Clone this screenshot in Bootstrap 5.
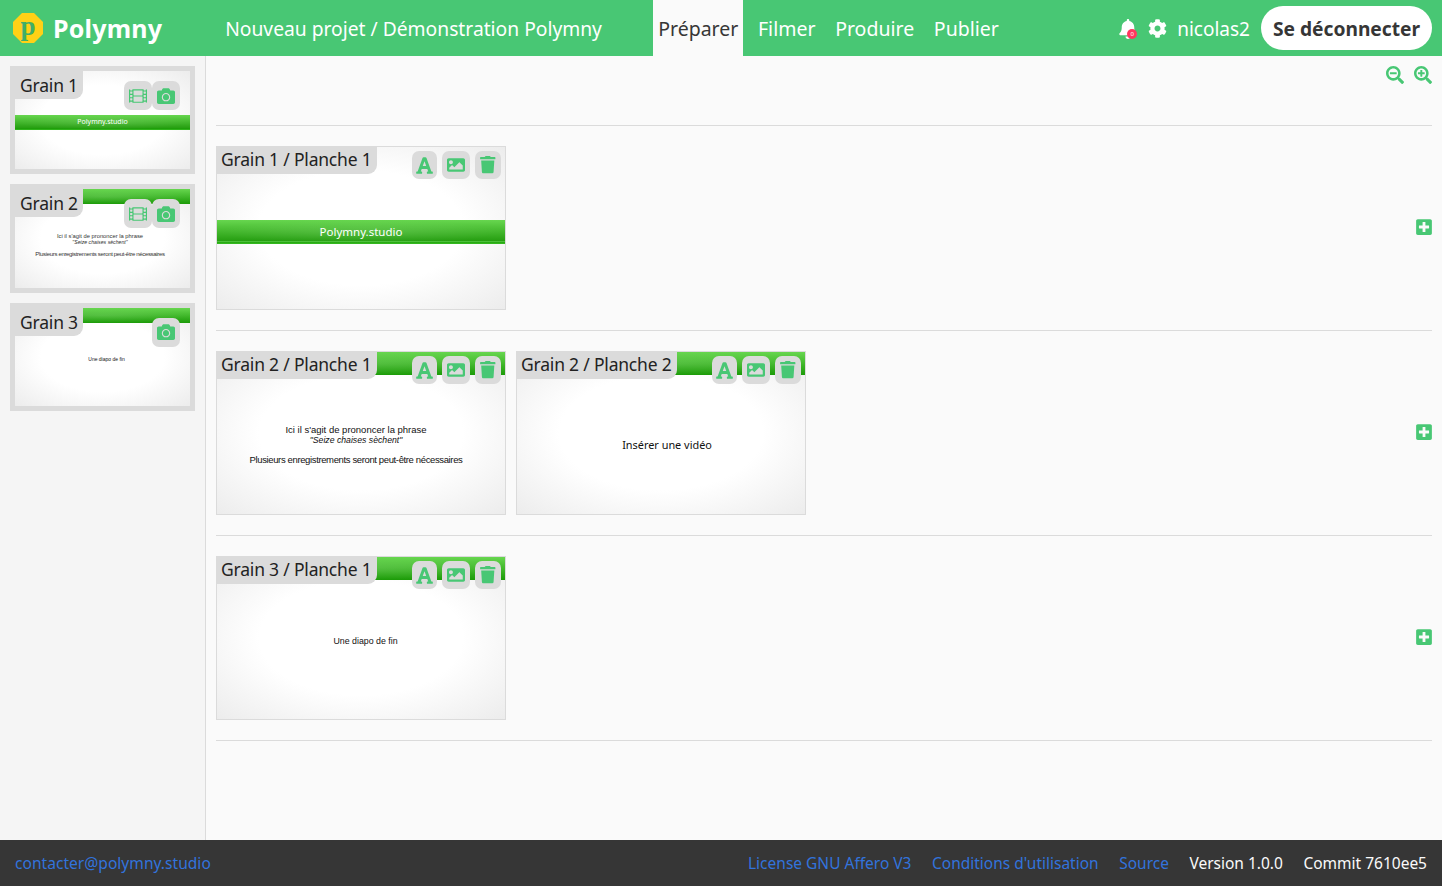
<!DOCTYPE html>
<html lang="fr">
<head>
  <meta charset="UTF-8">
  <title>Polymny</title>
  <link href="https://cdn.jsdelivr.net/npm/bootstrap@5.3.0/dist/css/bootstrap.min.css" rel="stylesheet">
  <style>
    html, body { height: 100%; }
    body { font-family: "Noto Sans", sans-serif; color: #363636; background: #fafafa; overflow: hidden; }
    .page-wrap { height: 886px; }
    .body-area { min-height: 0; }

    .top-bar { height: 56px; background: #48c774; color: #fff; padding: 0; flex-wrap: nowrap; }
    .logo-badge { width: 30px; height: 30px; margin-left: 13px; background: #ffd116; clip-path: polygon(30% 0, 70% 0, 100% 30%, 100% 70%, 70% 100%, 30% 100%, 0 70%, 0 30%); color: #3fae68; font: bold 27px/27px "Liberation Serif", serif; text-align: center; }
    .logo-name { font-size: 25px; font-weight: 700; color: #fff; margin-left: 10px; letter-spacing: .2px; padding-top: 1px; }
    .project-path { font-size: 19.25px; margin-left: 63px; width: 428px; white-space: nowrap; padding-top: 2px; }
    .top-link { display: flex; align-items: center; font-size: 19.5px; color: #fff; text-decoration: none; height: 56px; padding: 2px 5px 0; margin-right: 9.7px; }
    .top-link.current { background: #fafafa; color: #363636; }
    .account-box { gap: 11px; margin-right: 10px; }
    .bell-box { position: relative; width: 18px; height: 20px; margin-top: 1px; }
    .bell-box svg { width: 18px; height: 20px; fill: #fff; display: block; }
    .bell-count { position: absolute; left: 8px; top: 10px; width: 10px; height: 10px; border-radius: 50%; background: #ff3860; color: #fff; font-size: 6px; line-height: 10px; text-align: center; }
    .gear-icon { width: 19px; height: 19px; fill: #fff; margin-top: 1px; margin-right: -1px; }
    .user-name { font-size: 19px; padding-top: 2px; }
    .logout-btn { height: 44px; width: 171px; border-radius: 22px; background: #fff; color: #363636; font-size: 19.2px; font-weight: 700; border: 0; padding: 2px 0 0; }

    .side-col { width: 206px; flex: none; background: #f5f5f5; border-right: 1px solid #dbdbdb; padding: 10px; }
    .thumb-frame { position: relative; height: 108.4px; border: 5px solid #dbdbdb; margin-bottom: 10px; width: 185px; overflow: hidden; }
    .slide-bg { background: radial-gradient(ellipse at center, #fff 50%, #ececec 100%); }
    .name-tag { position: absolute; left: 0; top: 0; height: 28px; padding: 0 5px; background: #dbdbdb; color: #222; font-size: 17.5px; letter-spacing: -.2px; line-height: 28px; border-bottom-right-radius: 9px; white-space: nowrap; z-index: 2; }
    .slide-box .name-tag { left: -1px; top: -1px; line-height: 27px; }
    .tool-set { position: absolute; top: 4px; right: 4px; z-index: 2; gap: 5px; }
    .thumb-frame .tool-set { top: 10px; right: 10px; gap: 0; }
    .tool-btn { display: flex; align-items: center; justify-content: center; width: 28px; height: 28px; border-radius: 7px; background: #dbdbdb; }
    .thumb-frame .tool-btn { height: 29px; }
    .tool-btn.narrow-a { width: 25px; }
    .tool-btn.narrow-t { width: 26px; }
    .tool-btn svg { fill: #48c774; display: block; }
    .ico-18 { width: 18px; height: 18px; }
    .ico-a { width: 19px; height: 19px; }
    .ico-t { width: 17.5px; height: 17.5px; }

    .green-band { position: absolute; left: 0; right: 0; background: radial-gradient(ellipse at center, rgba(255,255,255,.1), rgba(255,255,255,0) 70%), linear-gradient(#67d64f, #1c9b08); }
    .band-top-thumb { top: 0; height: 15px; }
    .band-top-slide { top: 0; height: 23px; }
    .band-logo { background: radial-gradient(ellipse at center, rgba(255,255,255,.1), rgba(255,255,255,0) 70%), linear-gradient(#67d64f, #279f12 86%, #4cc03a 86%, #4cc03a 90%, #1f9f0a 90%, #38bd24); color: #fff; text-align: center; white-space: nowrap; }
    .band-logo-thumb { top: 44px; height: 15px; font-size: 7px; line-height: 14px; }
    .band-logo-slide { top: 73px; height: 24px; font-size: 11.5px; line-height: 23px; }

    .slide-text { position: absolute; left: 0; right: 0; color: #111; text-align: center; white-space: nowrap; font-family: "Liberation Sans", sans-serif; }
    .slide-lines { top: 73px; padding-right: 10px; font-size: 9.5px; line-height: 10px; }
    .slide-lines i { font-size: 8.7px; }
    .slide-long { top: 103px; padding-right: 10px; font-size: 9.5px; line-height: 10px; letter-spacing: -.37px; }
    .thumb-lines { top: 44px; font-size: 5.8px; line-height: 6px; padding-right: 5px; color: #333; }
    .thumb-lines i { font-size: 5.2px; }
    .thumb-long { top: 62px; font-size: 6px; line-height: 6px; letter-spacing: -.33px; padding-right: 5px; color: #333; }
    .thumb-end { top: 48px; font-size: 5px; line-height: 6px; padding-left: 8px; }
    .slide-video { top: 86px; font-family: "Noto Sans", sans-serif; font-size: 10.9px; line-height: 14px; padding-left: 12px; }
    .slide-end { top: 78px; font-size: 8.8px; line-height: 12px; padding-left: 9px; }

    .main-col { background: #fafafa; padding: 0 10px; min-width: 0; }
    .zoom-row { height: 70px; border-bottom: 1px solid #dbdbdb; padding-top: 10px; gap: 10px; }
    .zoom-row svg { width: 18px; height: 18px; fill: #48c774; display: block; }
    .grain-row { height: 205px; border-bottom: 1px solid #dbdbdb; padding: 20px 0; }
    .slide-list { gap: 10px; }
    .slide-box { position: relative; width: 290px; height: 164px; border: 1px solid #dbdbdb; }
    .add-icon { width: 16px; height: 18px; fill: #48c774; display: block; margin-bottom: 2px; }

    .site-foot { height: 46px; background: #363636; color: #fafafa; font-size: 15.6px; padding: 1px 15px 0; }
    .site-foot a { color: #3273dc; text-decoration: none; }
    .foot-links { gap: 20.5px; font-size: 15.5px; }
  </style>
</head>
<body>
  <svg width="0" height="0" class="position-absolute">
    <symbol id="i-film" viewBox="0 0 512 512"><path fill-rule="evenodd" d="M24 64h8v20c0 7 5 12 12 12h40c7 0 12-5 12-12V64h320v20c0 7 5 12 12 12h40c7 0 12-5 12-12V64h8c13 0 24 11 24 24v336c0 13-11 24-24 24h-8v-20c0-7-5-12-12-12h-40c-7 0-12 5-12 12v20H96v-20c0-7-5-12-12-12H44c-7 0-12 5-12 12v20h-8c-13 0-24-11-24-24V88c0-13 11-24 24-24zM44 128c-7 0-12 5-12 12v40c0 7 5 12 12 12h40c7 0 12-5 12-12v-40c0-7-5-12-12-12zm0 96c-7 0-12 5-12 12v40c0 7 5 12 12 12h40c7 0 12-5 12-12v-40c0-7-5-12-12-12zm0 96c-7 0-12 5-12 12v40c0 7 5 12 12 12h40c7 0 12-5 12-12v-40c0-7-5-12-12-12zm384-192c-7 0-12 5-12 12v40c0 7 5 12 12 12h40c7 0 12-5 12-12v-40c0-7-5-12-12-12zm0 96c-7 0-12 5-12 12v40c0 7 5 12 12 12h40c7 0 12-5 12-12v-40c0-7-5-12-12-12zm0 96c-7 0-12 5-12 12v40c0 7 5 12 12 12h40c7 0 12-5 12-12v-40c0-7-5-12-12-12zM140 96c-7 0-12 5-12 12v120c0 7 5 12 12 12h232c7 0 12-5 12-12V108c0-7-5-12-12-12zm0 176c-7 0-12 5-12 12v120c0 7 5 12 12 12h232c7 0 12-5 12-12V284c0-7-5-12-12-12z"/></symbol>
    <symbol id="i-camera" viewBox="0 0 512 512"><path d="M512 144v288c0 26.5-21.5 48-48 48H48c-26.5 0-48-21.5-48-48V144c0-26.5 21.5-48 48-48h88l12.3-32.9c7-18.7 24.9-31.1 44.9-31.1h125.5c20 0 37.9 12.4 44.9 31.1L376 96h88c26.5 0 48 21.5 48 48zM376 288c0-66.2-53.8-120-120-120s-120 53.8-120 120 53.8 120 120 120 120-53.8 120-120zm-32 0c0 48.5-39.5 88-88 88s-88-39.5-88-88 39.5-88 88-88 88 39.5 88 88z"/></symbol>
    <symbol id="i-font" viewBox="0 0 448 512"><path d="M432 416h-23.41L277.88 53.69A32 32 0 0 0 247.58 32h-47.16a32 32 0 0 0-30.3 21.69L39.41 416H16a16 16 0 0 0-16 16v32a16 16 0 0 0 16 16h128a16 16 0 0 0 16-16v-32a16 16 0 0 0-16-16h-19.58l23.3-64h152.56l23.3 64H304a16 16 0 0 0-16 16v32a16 16 0 0 0 16 16h128a16 16 0 0 0 16-16v-32a16 16 0 0 0-16-16zM176.85 272L224 142.51 271.15 272z"/></symbol>
    <symbol id="i-image" viewBox="0 0 512 512"><path d="M464 448H48c-26.51 0-48-21.49-48-48V112c0-26.51 21.49-48 48-48h416c26.51 0 48 21.49 48 48v288c0 26.51-21.49 48-48 48zM112 120c-30.928 0-56 25.072-56 56s25.072 56 56 56 56-25.072 56-56-25.072-56-56-56zM64 384h384V272l-87.515-87.515c-4.686-4.686-12.284-4.686-16.971 0L208 320l-55.515-55.515c-4.686-4.686-12.284-4.686-16.971 0L64 336v48z"/></symbol>
    <symbol id="i-trash" viewBox="0 0 448 512"><path d="M432 32H312l-9.4-18.7A24 24 0 0 0 281.1 0H166.8a23.72 23.72 0 0 0-21.4 13.3L136 32H16A16 16 0 0 0 0 48v32a16 16 0 0 0 16 16h416a16 16 0 0 0 16-16V48a16 16 0 0 0-16-16zM53.2 467a48 48 0 0 0 47.9 45h245.8a48 48 0 0 0 47.9-45L416 128H32z"/></symbol>
    <symbol id="i-plus" viewBox="0 0 448 512"><path d="M400 32H48C21.5 32 0 53.5 0 80v352c0 26.5 21.5 48 48 48h352c26.5 0 48-21.5 48-48V80c0-26.5-21.5-48-48-48zm-32 252c0 6.6-5.4 12-12 12h-92v92c0 6.6-5.4 12-12 12h-56c-6.6 0-12-5.4-12-12v-92H92c-6.6 0-12-5.4-12-12v-56c0-6.6 5.4-12 12-12h92v-92c0-6.6 5.4-12 12-12h56c6.6 0 12 5.4 12 12v92h92c6.6 0 12 5.4 12 12v56z"/></symbol>
    <symbol id="i-zoom-in" viewBox="0 0 512 512"><path d="M304 192v32c0 6.6-5.4 12-12 12h-56v56c0 6.6-5.4 12-12 12h-32c-6.6 0-12-5.4-12-12v-56h-56c-6.6 0-12-5.4-12-12v-32c0-6.6 5.4-12 12-12h56v-56c0-6.6 5.4-12 12-12h32c6.6 0 12 5.4 12 12v56h56c6.6 0 12 5.4 12 12zm201 284.7L476.7 505c-9.4 9.4-24.6 9.4-33.9 0L343 405.3c-4.5-4.5-7-10.6-7-17V372c-35.3 27.6-79.7 44-128 44C93.1 416 0 322.9 0 208S93.1 0 208 0s208 93.1 208 208c0 48.3-16.4 92.7-44 128h16.3c6.4 0 12.5 2.5 17 7l99.7 99.7c9.3 9.4 9.3 24.6 0 34zM344 208c0-75.2-60.8-136-136-136S72 132.8 72 208s60.8 136 136 136 136-60.8 136-136z"/></symbol>
    <symbol id="i-zoom-out" viewBox="0 0 512 512"><path d="M304 192v32c0 6.6-5.4 12-12 12H124c-6.6 0-12-5.4-12-12v-32c0-6.6 5.4-12 12-12h168c6.6 0 12 5.4 12 12zm201 284.7L476.7 505c-9.4 9.4-24.6 9.4-33.9 0L343 405.3c-4.5-4.5-7-10.6-7-17V372c-35.3 27.6-79.7 44-128 44C93.1 416 0 322.9 0 208S93.1 0 208 0s208 93.1 208 208c0 48.3-16.4 92.7-44 128h16.3c6.4 0 12.5 2.5 17 7l99.7 99.7c9.3 9.4 9.3 24.6 0 34zM344 208c0-75.2-60.8-136-136-136S72 132.8 72 208s60.8 136 136 136 136-60.8 136-136z"/></symbol>
  </svg>

  <div class="page-wrap d-flex flex-column">
    <nav class="navbar top-bar d-flex align-items-center">
      <div class="logo-badge">p</div>
      <span class="logo-name">Polymny</span>
      <span class="project-path">Nouveau projet / Démonstration Polymny</span>
      <a class="top-link current" href="#">Préparer</a>
      <a class="top-link" href="#">Filmer</a>
      <a class="top-link" href="#">Produire</a>
      <a class="top-link" href="#">Publier</a>
      <div class="account-box d-flex align-items-center ms-auto">
        <span class="bell-box">
          <svg viewBox="0 0 448 512"><path d="M224 512c35.32 0 63.97-28.65 63.97-64H160.03c0 35.35 28.65 64 63.97 64zm215.39-149.71c-19.32-20.76-55.47-51.99-55.47-154.29 0-77.7-54.48-139.9-127.94-155.16V32c0-17.67-14.32-32-31.98-32s-31.98 14.33-31.98 32v20.84C118.56 68.1 64.08 130.3 64.08 208c0 102.3-36.15 133.53-55.47 154.29-6 6.45-8.66 14.16-8.61 21.71.11 16.4 12.98 32 32.1 32h383.8c19.12 0 32-15.6 32.1-32 .05-7.55-2.61-15.27-8.61-21.71z"/></svg>
          <span class="bell-count">0</span>
        </span>
        <svg class="gear-icon" viewBox="0 0 512 512"><path d="M487.4 315.7l-42.6-24.6c4.3-23.2 4.3-47 0-70.2l42.6-24.6c4.9-2.8 7.1-8.6 5.5-14-11.1-35.6-30-67.8-54.7-94.6-3.8-4.1-10-5.1-14.8-2.3L380.8 110c-17.9-15.4-38.5-27.3-60.8-35.1V25.8c0-5.6-3.9-10.5-9.4-11.7-36.7-8.2-74.3-7.8-109.2 0-5.5 1.2-9.4 6.1-9.4 11.7V75c-22.2 7.9-42.8 19.8-60.8 35.1L88.7 85.5c-4.9-2.8-11-1.9-14.8 2.3-24.7 26.7-43.6 58.9-54.7 94.6-1.7 5.4.6 11.2 5.5 14L67.3 221c-4.3 23.2-4.3 47 0 70.2l-42.6 24.6c-4.9 2.8-7.1 8.6-5.5 14 11.1 35.6 30 67.8 54.7 94.6 3.8 4.1 10 5.1 14.8 2.3l42.6-24.6c17.9 15.4 38.5 27.3 60.8 35.1v49.2c0 5.6 3.9 10.5 9.4 11.7 36.7 8.2 74.3 7.8 109.2 0 5.5-1.2 9.4-6.1 9.4-11.7v-49.2c22.2-7.9 42.8-19.8 60.8-35.1l42.6 24.6c4.9 2.8 11 1.9 14.8-2.3 24.7-26.7 43.6-58.9 54.7-94.6 1.5-5.5-.7-11.3-5.6-14.1zM256 336c-44.1 0-80-35.9-80-80s35.9-80 80-80 80 35.9 80 80-35.9 80-80 80z"/></svg>
        <span class="user-name">nicolas2</span>
        <button class="btn logout-btn" type="button">Se déconnecter</button>
      </div>
    </nav>

    <div class="body-area d-flex flex-grow-1">
      <aside class="side-col">
        <div class="thumb-frame slide-bg">
          <span class="name-tag">Grain 1</span>
          <div class="tool-set d-flex">
            <span class="tool-btn"><svg class="ico-18"><use href="#i-film"/></svg></span>
            <span class="tool-btn"><svg class="ico-18"><use href="#i-camera"/></svg></span>
          </div>
          <div class="green-band band-logo band-logo-thumb">Polymny.studio</div>
        </div>
        <div class="thumb-frame slide-bg">
          <div class="green-band band-top-thumb"></div>
          <span class="name-tag">Grain 2</span>
          <div class="tool-set d-flex">
            <span class="tool-btn"><svg class="ico-18"><use href="#i-film"/></svg></span>
            <span class="tool-btn"><svg class="ico-18"><use href="#i-camera"/></svg></span>
          </div>
          <div class="slide-text thumb-lines">Ici il s'agit de prononcer la phrase<br><i>"Seize chaises sèchent"</i></div>
          <div class="slide-text thumb-long">Plusieurs enregistrements seront peut-être nécessaires</div>
        </div>
        <div class="thumb-frame slide-bg">
          <div class="green-band band-top-thumb"></div>
          <span class="name-tag">Grain 3</span>
          <div class="tool-set d-flex">
            <span class="tool-btn"><svg class="ico-18"><use href="#i-camera"/></svg></span>
          </div>
          <div class="slide-text thumb-end">Une diapo de fin</div>
        </div>
      </aside>

      <main class="main-col flex-grow-1">
        <div class="zoom-row d-flex justify-content-end">
          <svg><use href="#i-zoom-out"/></svg>
          <svg><use href="#i-zoom-in"/></svg>
        </div>

        <section class="grain-row d-flex justify-content-between">
          <div class="slide-list d-flex">
            <div class="slide-box slide-bg">
              <span class="name-tag">Grain 1 / Planche 1</span>
              <div class="tool-set d-flex">
                <span class="tool-btn narrow-a"><svg class="ico-a"><use href="#i-font"/></svg></span>
                <span class="tool-btn"><svg class="ico-18"><use href="#i-image"/></svg></span>
                <span class="tool-btn narrow-t"><svg class="ico-t"><use href="#i-trash"/></svg></span>
              </div>
              <div class="green-band band-logo band-logo-slide">Polymny.studio</div>
            </div>
          </div>
          <svg class="add-icon align-self-center"><use href="#i-plus"/></svg>
        </section>

        <section class="grain-row d-flex justify-content-between">
          <div class="slide-list d-flex">
            <div class="slide-box slide-bg">
              <div class="green-band band-top-slide"></div>
              <span class="name-tag">Grain 2 / Planche 1</span>
              <div class="tool-set d-flex">
                <span class="tool-btn narrow-a"><svg class="ico-a"><use href="#i-font"/></svg></span>
                <span class="tool-btn"><svg class="ico-18"><use href="#i-image"/></svg></span>
                <span class="tool-btn narrow-t"><svg class="ico-t"><use href="#i-trash"/></svg></span>
              </div>
              <div class="slide-text slide-lines">Ici il s'agit de prononcer la phrase<br><i>"Seize chaises sèchent"</i></div>
              <div class="slide-text slide-long">Plusieurs enregistrements seront peut-être nécessaires</div>
            </div>
            <div class="slide-box slide-bg">
              <div class="green-band band-top-slide"></div>
              <span class="name-tag">Grain 2 / Planche 2</span>
              <div class="tool-set d-flex">
                <span class="tool-btn narrow-a"><svg class="ico-a"><use href="#i-font"/></svg></span>
                <span class="tool-btn"><svg class="ico-18"><use href="#i-image"/></svg></span>
                <span class="tool-btn narrow-t"><svg class="ico-t"><use href="#i-trash"/></svg></span>
              </div>
              <div class="slide-text slide-video">Insérer une vidéo</div>
            </div>
          </div>
          <svg class="add-icon align-self-center"><use href="#i-plus"/></svg>
        </section>

        <section class="grain-row d-flex justify-content-between">
          <div class="slide-list d-flex">
            <div class="slide-box slide-bg">
              <div class="green-band band-top-slide"></div>
              <span class="name-tag">Grain 3 / Planche 1</span>
              <div class="tool-set d-flex">
                <span class="tool-btn narrow-a"><svg class="ico-a"><use href="#i-font"/></svg></span>
                <span class="tool-btn"><svg class="ico-18"><use href="#i-image"/></svg></span>
                <span class="tool-btn narrow-t"><svg class="ico-t"><use href="#i-trash"/></svg></span>
              </div>
              <div class="slide-text slide-end">Une diapo de fin</div>
            </div>
          </div>
          <svg class="add-icon align-self-center"><use href="#i-plus"/></svg>
        </section>
      </main>
    </div>

    <footer class="site-foot d-flex align-items-center">
      <a href="#">contacter@polymny.studio</a>
      <div class="foot-links d-flex ms-auto">
        <a href="#">License GNU Affero V3</a>
        <a href="#">Conditions d'utilisation</a>
        <a href="#">Source</a>
        <span>Version 1.0.0</span>
        <span>Commit 7610ee5</span>
      </div>
    </footer>
  </div>
  <script src="https://cdn.jsdelivr.net/npm/bootstrap@5.3.0/dist/js/bootstrap.bundle.min.js"></script>
</body>
</html>
